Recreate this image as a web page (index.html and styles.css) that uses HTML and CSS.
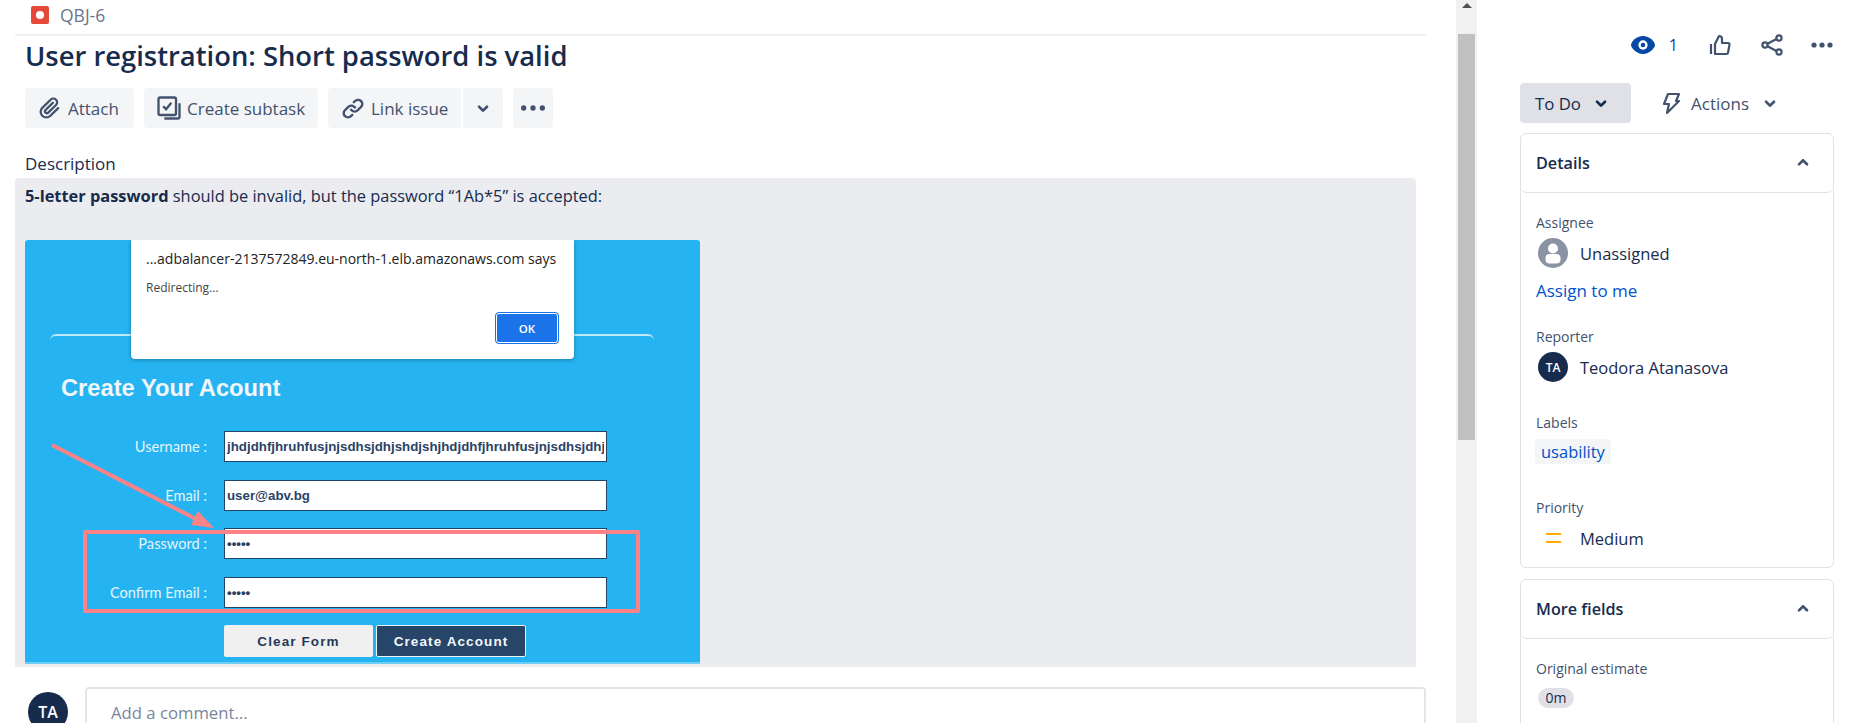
FILE: index.html
```html
<!DOCTYPE html>
<html lang="en">
<head>
    <meta charset="UTF-8">
    <meta name="viewport" content="width=device-width, initial-scale=1.0">
    <title>QBJ-6 User registration: Short password is valid</title>
    <link rel="stylesheet" href="styles.css">
</head>
<body>
    <div class="page">
        <main class="issue">
            <div class="issue-key">
                <span class="bug-icon"></span>
                <span>QBJ-6</span>
            </div>
            <h1 class="issue-title">User registration: Short password is valid</h1>

            <div class="action-row">
                <button class="action-btn attach-btn">
                    <svg class="icon" viewBox="0 0 24 24"><path fill="currentColor" d="M11.643 17.965c-1.53 1.495-4.016 1.496-5.542.004a3.773 3.773 0 01.002-5.412l7.147-6.985a2.316 2.316 0 013.233-.003c.893.873.895 2.282.004 3.153l-6.703 6.55a.653.653 0 01-.914-.008.62.62 0 010-.902l6.229-6.087a.941.941 0 000-1.353.995.995 0 00-1.384 0l-6.23 6.087a2.502 2.502 0 000 3.607 2.643 2.643 0 003.683.009l6.703-6.55a4.074 4.074 0 00-.004-5.859 4.306 4.306 0 00-6.011.003l-7.146 6.984a5.655 5.655 0 00-.002 8.112c2.29 2.239 6.015 2.238 8.31-.005l6.686-6.533a.941.941 0 000-1.353.995.995 0 00-1.384 0l-6.687 6.534z"/></svg>
                    Attach
                </button>
                <button class="action-btn subtask-btn">
                    <svg class="icon" viewBox="0 0 24 24" fill="none" stroke="currentColor" stroke-width="2"><rect x="3" y="3" width="15" height="15" rx="1.5"/><path d="M7 10.5l2.5 2.5L14 7.5"/><path d="M21 8v11.5a1.5 1.5 0 01-1.5 1.5H8"/></svg>
                    Create subtask
                </button>
                <div class="split-btn">
                    <button class="action-btn link-btn">
                        <svg class="icon" viewBox="0 0 24 24" fill="currentColor"><path d="M12.856 5.457l-.937.92a1.002 1.002 0 000 1.437 1.047 1.047 0 001.463 0l.984-.966c.967-.95 2.542-1.135 3.602-.288a2.54 2.54 0 01.203 3.81l-2.903 2.852a2.646 2.646 0 01-3.696 0l-1.11-1.09L9 13.57l1.108 1.089c1.822 1.788 4.802 1.788 6.622 0l2.905-2.852a4.558 4.558 0 00-.357-6.82c-1.893-1.517-4.695-1.226-6.422.47"/><path d="M11.144 19.543l.937-.92a1.002 1.002 0 000-1.437 1.047 1.047 0 00-1.462 0l-.985.966c-.967.95-2.542 1.135-3.602.288a2.54 2.54 0 01-.203-3.81l2.903-2.852a2.646 2.646 0 013.696 0l1.11 1.09L15 11.43l-1.108-1.089c-1.822-1.788-4.802-1.788-6.622 0l-2.905 2.852a4.558 4.558 0 00.357 6.82c1.893 1.517 4.695 1.226 6.422-.47"/></svg>
                        Link issue
                    </button>
                    <button class="action-btn caret-btn">
                        <svg class="icon wide-icon" viewBox="0 0 24 24"><path fill="currentColor" d="M8.292 10.293a1.009 1.009 0 000 1.419l2.939 2.965c.218.215.5.322.779.322s.556-.107.769-.322l2.93-2.955a1.01 1.01 0 000-1.419.987.987 0 00-1.406 0l-2.298 2.317-2.307-2.327a.99.99 0 00-1.406 0z"/></svg>
                    </button>
                </div>
                <button class="action-btn more-btn">
                    <svg class="icon wide-icon" viewBox="0 0 24 24" fill="currentColor"><circle cx="5" cy="12" r="2"/><circle cx="12" cy="12" r="2"/><circle cx="19" cy="12" r="2"/></svg>
                </button>
            </div>

            <h2 class="section-label">Description</h2>
            <div class="description">
                <p class="description-text"><strong>5-letter password</strong> should be invalid, but the password “1Ab*5” is accepted:</p>

                <div class="shot">
                    <div class="shot-rule"></div>
                    <h3 class="shot-title">Create Your Acount</h3>
                    <form class="shot-form" onsubmit="return false;">
                        <label for="shotUser">Username :</label>
                        <input type="text" id="shotUser" value="jhdjdhfjhruhfusjnjsdhsjdhjshdjshjhdjdhfjhruhfusjnjsdhsjdhjshd" readonly>
                        <label for="shotEmail">Email :</label>
                        <input type="text" id="shotEmail" value="user@abv.bg" readonly>
                        <label for="shotPass">Password :</label>
                        <input type="password" id="shotPass" value="1Ab*5" readonly>
                        <label for="shotConfirm">Confirm Email :</label>
                        <input type="password" id="shotConfirm" value="1Ab*5" readonly>
                        <div class="shot-buttons">
                            <button class="shot-clear">Clear Form</button>
                            <button class="shot-create">Create Account</button>
                        </div>
                    </form>

                    <!-- annotations drawn on top of the screenshot -->
                    <div class="note-box"></div>
                    <svg class="note-arrow" viewBox="0 0 675 424">
                        <path d="M27 205L171 279" stroke="#fb8287" stroke-width="4" fill="none"/>
                        <polygon points="189,288 166,285 173,271" fill="#fb8287"/>
                    </svg>

                    <div class="alert">
                        <div class="alert-title">...adbalancer-2137572849.eu-north-1.elb.amazonaws.com says</div>
                        <div class="alert-text">Redirecting...</div>
                        <div class="alert-actions"><button class="alert-ok">OK</button></div>
                    </div>
                </div>
            </div>

            <div class="comment-row">
                <span class="avatar comment-avatar">TA</span>
                <div class="comment-box">Add a comment...</div>
            </div>
        </main>

        <div class="scrollbar">
            <div class="scroll-up"><span class="scroll-arrow"></span></div>
            <div class="scroll-thumb"></div>
        </div>

        <aside class="sidebar">
            <div class="top-actions">
                <span class="watch">
                    <svg class="eye" viewBox="4 6 16 12"><path fill="#0747a6" d="M12 18c-4.536 0-7.999-4.26-7.999-6 0-2.001 3.459-6 8-6 4.376 0 7.998 3.973 7.998 6 0 1.74-3.462 6-7.999 6z"/><circle cx="12" cy="12" r="3.1" fill="#fff"/><circle cx="12" cy="12" r="1.5" fill="#0747a6"/></svg>
                    1
                </span>
                <svg class="top-icon like-icon" viewBox="0 0 24 24" fill="none" stroke="#42526e" stroke-width="2.2" stroke-linejoin="round"><path d="M3 11v10"/><path d="M7 11l4-8c2 0 3 1.3 3 3v4h6a1.5 1.5 0 011.5 1.8l-1.5 8A1.5 1.5 0 0118.5 21H7z"/></svg>
                <svg class="top-icon share-icon" viewBox="0 0 24 24" fill="none" stroke="#42526e" stroke-width="2.2"><circle cx="19" cy="5" r="2.6"/><circle cx="19" cy="19" r="2.6"/><circle cx="5" cy="12" r="2.6"/><path d="M7.5 10.7l9-4.6M7.5 13.3l9 4.6"/></svg>
                <svg class="top-icon more-icon" viewBox="0 0 24 24" fill="#42526e"><circle cx="4" cy="12" r="2.6"/><circle cx="12" cy="12" r="2.6"/><circle cx="20" cy="12" r="2.6"/></svg>
            </div>

            <div class="status-row">
                <button class="status-btn">
                    To Do
                    <svg class="chevron" viewBox="0 0 24 24"><path fill="currentColor" d="M8.292 10.293a1.009 1.009 0 000 1.419l2.939 2.965c.218.215.5.322.779.322s.556-.107.769-.322l2.93-2.955a1.01 1.01 0 000-1.419.987.987 0 00-1.406 0l-2.298 2.317-2.307-2.327a.99.99 0 00-1.406 0z"/></svg>
                </button>
                <div class="actions-btn">
                    <svg class="bolt" viewBox="0 0 24 24" fill="none" stroke="currentColor" stroke-width="2.2" stroke-linejoin="round"><path d="M9 3h11l-3 7h3L8 22l2-9H5z"/></svg>
                    Actions
                    <svg class="chevron" viewBox="0 0 24 24"><path fill="currentColor" d="M8.292 10.293a1.009 1.009 0 000 1.419l2.939 2.965c.218.215.5.322.779.322s.556-.107.769-.322l2.93-2.955a1.01 1.01 0 000-1.419.987.987 0 00-1.406 0l-2.298 2.317-2.307-2.327a.99.99 0 00-1.406 0z"/></svg>
                </div>
            </div>

            <section class="card">
                <div class="card-head">
                    <span>Details</span>
                    <svg class="chevron" viewBox="0 0 24 24"><path fill="currentColor" d="M8.292 13.707a1.009 1.009 0 010-1.419l2.939-2.965c.218-.215.5-.322.779-.322s.556.107.769.322l2.93 2.955a1.01 1.01 0 010 1.419.987.987 0 01-1.406 0l-2.298-2.317-2.307 2.327a.99.99 0 01-1.406 0z"/></svg>
                </div>
                <div class="card-body details-body">
                    <div class="field-label">Assignee</div>
                    <div class="field-value">
                        <svg class="avatar-svg" viewBox="0 0 30 30"><circle cx="15" cy="15" r="15" fill="#8993a4"/><circle cx="15" cy="10.5" r="5" fill="#fff"/><rect x="7.5" y="16" width="15" height="9.5" rx="4" fill="#fff"/></svg>
                        <span>Unassigned</span>
                    </div>
                    <a class="assign-link">Assign to me</a>

                    <div class="field-label reporter-label">Reporter</div>
                    <div class="field-value">
                        <span class="avatar small-avatar">TA</span>
                        <span>Teodora Atanasova</span>
                    </div>

                    <div class="field-label labels-label">Labels</div>
                    <span class="label-chip">usability</span>

                    <div class="field-label priority-label">Priority</div>
                    <div class="field-value">
                        <span class="priority-icon"></span>
                        <span>Medium</span>
                    </div>
                </div>
            </section>

            <section class="card more-card">
                <div class="card-head">
                    <span>More fields</span>
                    <svg class="chevron" viewBox="0 0 24 24"><path fill="currentColor" d="M8.292 13.707a1.009 1.009 0 010-1.419l2.939-2.965c.218-.215.5-.322.779-.322s.556.107.769.322l2.93 2.955a1.01 1.01 0 010 1.419.987.987 0 01-1.406 0l-2.298-2.317-2.307 2.327a.99.99 0 01-1.406 0z"/></svg>
                </div>
                <div class="card-body">
                    <div class="field-label">Original estimate</div>
                    <span class="time-chip">0m</span>
                </div>
            </section>
        </aside>
    </div>
</body>
</html>
```

FILE: styles.css
```css
* {
    box-sizing: border-box;
}
html, body {
    height: 100%;
    margin: 0;
    overflow: hidden;
}
body {
    background-color: #ffffff;
    color: #172b4d;
    font-family: "Open Sans", "Noto Sans", sans-serif;
    font-size: 16.5px;
}
button {
    font-family: inherit;
    border: none;
}
.page {
    display: flex;
    height: 723px;
    overflow: hidden;
}

/* left column */
.issue {
    width: 1456px;
    flex: none;
    padding: 0 30px 0 15px;
}
.issue-key {
    display: flex;
    align-items: center;
    gap: 11px;
    height: 36px;
    padding: 0 0 4px 16px;
    border-bottom: 2px solid #eff0f3;
    color: #6b778c;
    font-size: 17.5px;
}
.bug-icon {
    position: relative;
    width: 18px;
    height: 18px;
    border-radius: 2px;
    background-color: #e5493a;
}
.bug-icon::after {
    content: "";
    position: absolute;
    left: 5px;
    top: 5px;
    width: 8px;
    height: 8px;
    border-radius: 50%;
    background-color: #ffffff;
}
.issue-title {
    margin: 0 0 0 10px;
    font-size: 27.4px;
    font-weight: 600;
    line-height: 40px;
}
.action-row {
    display: flex;
    gap: 10px;
    margin: 12px 0 0 10px;
    height: 40px;
}
.action-btn {
    display: flex;
    align-items: center;
    gap: 4px;
    height: 40px;
    padding: 0 0 0 11px;
    border-radius: 4px;
    background-color: #f4f5f7;
    color: #42526e;
    font-size: 17px;
}
.icon {
    width: 28px;
    height: 28px;
    flex: none;
}
.wide-icon {
    width: 32px;
    height: 32px;
}
.attach-btn {
    width: 109px;
}
.subtask-btn {
    width: 174px;
}
.split-btn {
    display: flex;
    gap: 2px;
}
.link-btn {
    width: 133px;
    border-radius: 4px 0 0 4px;
}
.caret-btn {
    width: 40px;
    padding: 0;
    justify-content: center;
    border-radius: 0 4px 4px 0;
}
.more-btn {
    width: 40px;
    padding: 0;
    justify-content: center;
}
.section-label {
    margin: 24px 0 0 10px;
    font-size: 17px;
    font-weight: 500;
    line-height: 24px;
}
.description {
    width: 1401px;
    margin-top: 2px;
    padding: 6px 0 3px 10px;
    background-color: #ebecf0;
    border-radius: 4px 4px 0 0;
}
.description-text {
    margin: 0 0 32px 0;
    font-size: 16.4px;
    line-height: 24px;
}
.description-text strong {
    font-weight: 700;
}

/* pasted screenshot */
.shot {
    position: relative;
    width: 675px;
    height: 424px;
    padding-top: 94px;
    background-color: #25b4f1;
    border-bottom: 2px solid #6ccdf5;
    border-radius: 3px 3px 0 0;
    overflow: hidden;
    font-family: "Liberation Sans", sans-serif;
}
.shot-rule {
    width: 604px;
    height: 12px;
    margin-left: 25px;
    border-top: 2px solid #bfe8fb;
    border-radius: 6px 6px 0 0;
}
.shot-title {
    margin: 26px 0 0 36px;
    color: #f1f6fa;
    font-size: 23.7px;
    font-weight: 700;
    line-height: 32px;
}
.shot-form {
    display: grid;
    grid-template-columns: 182px 383px;
    column-gap: 17px;
    row-gap: 17.5px;
    margin-top: 27px;
}
.shot-form label {
    align-self: center;
    text-align: right;
    color: #e4f5fd;
    font-family: Lato, sans-serif;
    font-size: 14.6px;
}
.shot-form input {
    width: 383px;
    height: 31px;
    padding: 0 2px;
    border: 1px solid #1f4668;
    border-radius: 0;
    outline: none;
    color: #2a4365;
    font-family: "Liberation Sans", sans-serif;
    font-size: 13.3px;
    font-weight: 700;
}
.shot-buttons {
    grid-column: 2;
    display: flex;
    gap: 3px;
}
.shot-buttons button {
    height: 32px;
    font-family: "Liberation Sans", sans-serif;
    font-size: 13.5px;
    font-weight: 700;
    letter-spacing: 1.1px;
    border-radius: 2px;
}
.shot-clear {
    width: 149px;
    background-color: #f0f0f0;
    color: #1f3a5a;
}
.shot-create {
    width: 150px;
    background-color: #264569;
    border: 1px solid #e8f4fb;
    color: #f4f7fa;
}
.note-box {
    position: absolute;
    left: 58px;
    top: 290px;
    width: 557px;
    height: 83px;
    border: 4px solid #fb8287;
    border-radius: 2px;
}
.note-arrow {
    position: absolute;
    left: 0;
    top: 0;
    width: 675px;
    height: 424px;
}
.alert {
    position: absolute;
    left: 106px;
    top: 0;
    width: 443px;
    height: 119px;
    padding: 9px 15px 0 15px;
    background-color: #ffffff;
    border-radius: 0 0 4px 4px;
    box-shadow: 0 1px 4px rgba(0,0,0,0.3);
    font-family: "Open Sans", sans-serif;
    color: #222222;
}
.alert-title {
    font-size: 14px;
    line-height: 20px;
    white-space: nowrap;
}
.alert-text {
    margin-top: 10px;
    font-size: 12px;
    line-height: 18px;
    color: #444444;
}
.alert-actions {
    display: flex;
    justify-content: flex-end;
    margin-top: 15px;
}
.alert-ok {
    width: 64px;
    height: 32px;
    padding: 0;
    background-color: #1a73e8;
    border: 1px solid #1a73e8;
    outline: 1px solid #ffffff;
    outline-offset: -2px;
    border-radius: 4px;
    color: #ffffff;
    font-size: 11.5px;
    font-weight: 600;
}
.comment-row {
    display: flex;
    align-items: flex-start;
    gap: 17px;
    margin-top: 20px;
    padding-left: 13px;
}
.avatar {
    display: flex;
    align-items: center;
    justify-content: center;
    flex: none;
    border-radius: 50%;
    background-color: #172b4d;
    color: #ffffff;
    font-weight: 600;
}
.comment-avatar {
    width: 40px;
    height: 40px;
    margin-top: 5px;
    font-size: 16px;
}
.comment-box {
    flex: 1;
    height: 60px;
    padding: 12px 24px;
    border: 2px solid #e4e5e9;
    border-radius: 4px;
    color: #7a869a;
    font-size: 16.7px;
    line-height: 24px;
}

/* scrollbar */
.scrollbar {
    width: 21px;
    flex: none;
    background-color: #f1f1f1;
}
.scroll-up {
    display: flex;
    justify-content: center;
    height: 34px;
    padding-top: 3px;
}
.scroll-arrow {
    width: 0;
    height: 0;
    border-left: 5px solid transparent;
    border-right: 5px solid transparent;
    border-bottom: 5px solid #505050;
}
.scroll-thumb {
    height: 406px;
    margin: 0 2px;
    background-color: #c1c1c1;
}

/* right column */
.sidebar {
    flex: none;
    width: 380px;
    padding: 30px 23px 0 43px;
}
.top-actions {
    display: flex;
    align-items: center;
    justify-content: flex-end;
    height: 30px;
}
.watch {
    display: flex;
    align-items: center;
    gap: 14px;
    color: #0747a6;
    font-size: 16px;
}
.eye {
    width: 24px;
    height: 20px;
}
.top-icon {
    width: 24px;
    height: 24px;
}
.like-icon {
    margin-left: 30px;
}
.share-icon {
    margin-left: 28px;
}
.more-icon {
    margin-left: 26px;
}
.status-row {
    display: flex;
    align-items: center;
    margin-top: 23px;
    height: 40px;
}
.status-btn {
    display: flex;
    align-items: center;
    width: 111px;
    height: 40px;
    padding: 0 0 0 15px;
    gap: 4px;
    border-radius: 4px;
    background-color: #dfe1e6;
    color: #172b4d;
    font-size: 16.8px;
}
.chevron {
    width: 32px;
    height: 32px;
    flex: none;
}
.actions-btn {
    display: flex;
    align-items: center;
    margin-left: 28px;
    color: #42526e;
    font-size: 17px;
}
.bolt {
    width: 24px;
    height: 24px;
    margin-right: 8px;
}
.actions-btn .chevron {
    margin-left: 5px;
}
.card {
    margin-top: 10px;
    border: 1px solid #dfe1e6;
    border-radius: 6px;
    height: 435px;
}
.more-card {
    margin-top: 11px;
    height: 200px;
}
.card-head {
    display: flex;
    align-items: center;
    justify-content: space-between;
    height: 59px;
    padding: 0 14px 0 15px;
    border-bottom: 1px solid #dfe1e6;
    border-radius: 6px;
    font-weight: 600;
    font-size: 16.2px;
}
.card-head .chevron {
    color: #42526e;
}
.card-body {
    padding: 20px 15px 14px 15px;
}
.field-label {
    color: #42526e;
    font-size: 14px;
    font-weight: 500;
    line-height: 20px;
}
.field-value {
    display: flex;
    align-items: center;
    gap: 12px;
    height: 30px;
    margin: 5px 0 0 2px;
}
.avatar-svg {
    width: 30px;
    height: 30px;
    flex: none;
}
.small-avatar {
    width: 30px;
    height: 30px;
    font-size: 12px;
}
.assign-link {
    display: block;
    margin-top: 11px;
    color: #0052cc;
    font-size: 17px;
    line-height: 24px;
}
.reporter-label {
    margin-top: 24px;
}
.labels-label {
    margin-top: 31px;
}
.priority-label {
    margin-top: 34px;
}
.label-chip {
    display: inline-block;
    height: 25px;
    margin: 6px 0 0 -1px;
    padding: 0 6px;
    border-radius: 3px;
    background-color: #f4f5f7;
    color: #0052cc;
    line-height: 25px;
}
.priority-icon {
    width: 30px;
    height: 10px;
    flex: none;
    background:
        linear-gradient(#ffab00, #ffab00) center top / 15px 2px no-repeat,
        linear-gradient(#ffab00, #ffab00) center bottom / 15px 2px no-repeat;
}
.time-chip {
    display: inline-block;
    width: 36px;
    height: 20px;
    margin: 9px 0 0 2px;
    border-radius: 10px;
    background-color: #dfe1e6;
    font-size: 14px;
    line-height: 20px;
    text-align: center;
}
```
